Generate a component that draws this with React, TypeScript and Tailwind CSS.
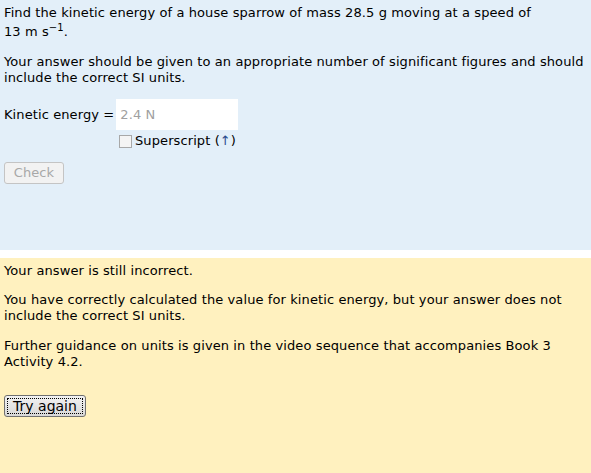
import React from "react";

const App: React.FC = () => {
  return (
    <div className="flex flex-col h-[473px] w-[591px] bg-white text-[13px] leading-[16px] tracking-[0.1px] text-black font-['DejaVu_Sans',Verdana,sans-serif]">
      <section className="h-[250px] bg-[#e3eff9] px-[4px] pt-[3px]">
        <p className="leading-[19px]">
          Find the kinetic energy of a house sparrow of mass 28.5 g moving at a speed of
          <br />
          13 m s<sup className="text-[10px] leading-none">−1</sup>.
        </p>
        <p className="mt-[13px]">
          Your answer should be given to an appropriate number of significant figures and should
          <br />
          include the correct SI units.
        </p>

        <div className="mt-[13px] flex items-center">
          <span>Kinetic energy =</span>
          <input
            className="ml-[2px] w-[122px] h-[31px] bg-white px-[4px] outline-none placeholder:text-[#a0a0a0]"
            placeholder="2.4 N"
          />
        </div>
        <label className="ml-[115px] mt-[3px] flex items-center gap-[3px]">
          <span className="w-[13px] h-[13px] border border-[#a8a8a8] bg-[#f4f4f4]" />
          <span>
            Superscript (<span className="text-[#2a4a8c]">↑</span>)
          </span>
        </label>

        <button
          disabled
          className="mt-[13px] w-[60px] h-[22px] rounded-[3px] border border-[#c4c4c4] bg-[#f2f2f2] text-[#a8a8a8]"
        >
          Check
        </button>
      </section>

      <section className="mt-[8px] flex-1 bg-[#fff1bf] px-[4px] pt-[5px]">
        <p>Your answer is still incorrect.</p>
        <p className="mt-[13px]">
          You have correctly calculated the value for kinetic energy, but your answer does not
          <br />
          include the correct SI units.
        </p>
        <p className="mt-[14px]">
          Further guidance on units is given in the video sequence that accompanies Book 3
          <br />
          Activity 4.2.
        </p>
        <button className="mt-[25px] w-[82px] h-[22px] rounded-[3px] border border-[#707070] bg-gradient-to-b from-[#f2f2f2] to-[#d8d8d8] p-[2px] text-[14px] leading-[14px] tracking-normal">
          <span className="flex h-full w-full items-center justify-center border border-dotted border-black">
            Try again
          </span>
        </button>
      </section>
    </div>
  );
};

export default App;
